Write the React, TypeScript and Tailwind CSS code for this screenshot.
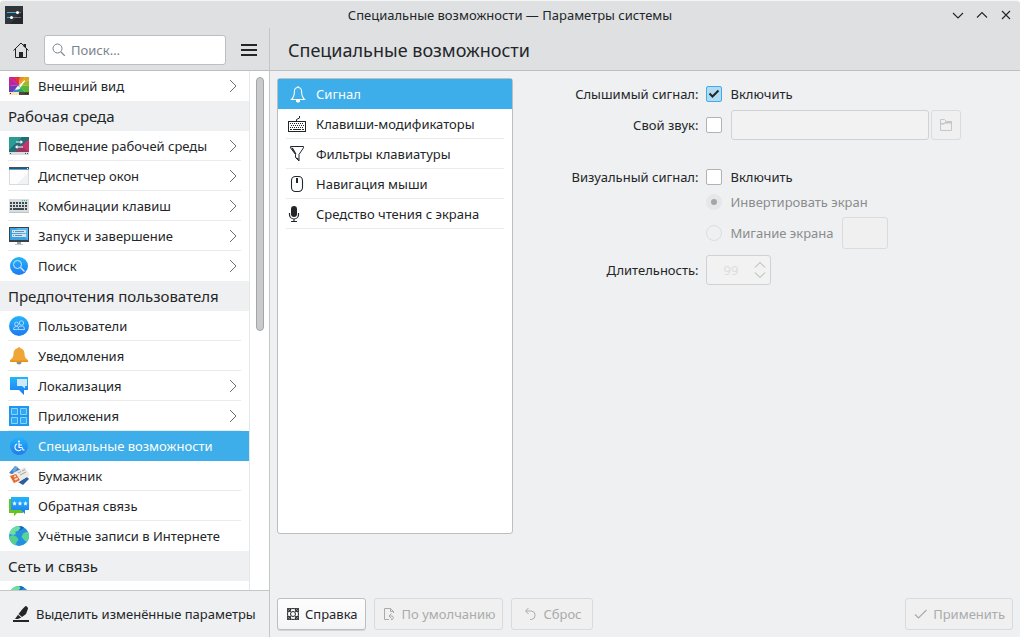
import React from "react";
import clsx from "clsx";

type IconProps = { className?: string };

function Svg({ size = 22, children, className }: { size?: number; children: React.ReactNode; className?: string }) {
  return (
    <svg
      width={size}
      height={size}
      viewBox={`0 0 ${size} ${size}`}
      fill="none"
      aria-hidden="true"
      className={clsx("shrink-0", className)}
    >
      {children}
    </svg>
  );
}

/* ---------- colour icons of the sidebar ---------- */

const AppearanceIcon = () => (
  <Svg>
    <path d="M1 2h10v8z" fill="#e2187a" />
    <path d="M1 2v9l10-1z" fill="#c0249a" />
    <path d="M1 2h5l5 8z" fill="#d01f92" />
    <path d="M6 2h6l-1 8z" fill="#e8352d" />
    <path d="M12 2h5l-6 8z" fill="#f08a1d" />
    <path d="M17 2h4v3l-10 5z" fill="#d9a81c" />
    <path d="M21 5v6l-10-1z" fill="#a6b51f" />
    <path d="M21 11v6h-4l-6-7z" fill="#5cb531" />
    <path d="M17 17h-6v-7z" fill="#2fa866" />
    <path d="M11 17H5l6-7z" fill="#2a8fb5" />
    <path d="M5 17H1v-6l10-1z" fill="#6d3cb8" />
    <path d="M16.500 5l-5.500 6 1.500 1.500 4.500-6.500z" fill="#fff" />
    <path d="M10.500 11l2 2c-1 1.500-3 2-5.500 1.500 1.500-1 1.500-3 3.500-3.500z" fill="#f5f5f5" />
    <path d="M1 17h10v3H1z" fill="#fbe3c8" />
    <path d="M11 17h10v3H11z" fill="#4b4a3a" />
    <path d="M2 18h1v1H2zM17 18h1v1h-1zM19 18h1v1h-1z" fill="#222" />
  </Svg>
);

const WorkspaceIcon = () => (
  <Svg>
    <path d="M1 2h20v15H1z" fill="#246c78" />
    <path d="M1 2h13L1 15z" fill="#2a9d93" />
    <path d="M21 4v13H7z" fill="#c7336b" />
    <path d="M13 11l8 6H7z" fill="#93375f" />
    <path d="M8 7h6M9 12h6" stroke="#fff" strokeWidth="1.200" />
    <path d="M12.500 5L15 7l-2.500 2zM9.500 10L7 12l2.500 2z" fill="#fff" />
    <path d="M1 17h20v3H1z" fill="#d9dcde" />
    <path d="M2 18h1v1H2zM17 18h1v1h-1zM19 18h1v1h-1z" fill="#45505a" />
  </Svg>
);

const WindowIcon = () => (
  <Svg>
    <path d="M1 2h20v18H1z" fill="#d7dade" />
    <path d="M2 5h18v14H2z" fill="#fdfdfd" />
    <path d="M20 8v11H9z" fill="#f1f2f4" />
    <path d="M1 2h20v3H1z" fill="#43505f" />
    <path d="M1 4h20v1H1z" fill="#3daee9" />
    <path d="M19 3h1v1h-1z" fill="#fff" />
  </Svg>
);

const KeyboardIcon = () => (
  <Svg>
    <path d="M1 4h20v14H1z" fill="#dadddf" />
    <path d="M14 5h1v1h-1zM16 5h1v1h-1zM18 5h1v1h-1z" fill="#2ecc71" />
    <path d="M2 8h18M2 11h18M2 14h18" stroke="#3f4a50" strokeWidth="2" strokeDasharray="2 1" />
    <path d="M6 14h9" stroke="#3f4a50" strokeWidth="2" />
    <path d="M1 17h20v1H1z" fill="#bfc3c6" />
  </Svg>
);

const StartupIcon = () => (
  <Svg>
    <path d="M1 2h20v15H1z" fill="#3a4249" />
    <path d="M2 3h18v12H2z" fill="#3aa3e3" />
    <path d="M8 3h12v12z" fill="#58b7ee" />
    <path d="M4 5h14v3H4zM4 9h14v3H4z" fill="#d3e4f1" />
    <path d="M5 6h1v1H5zM7 6h9v1H7zM5 10h1v1H5zM7 10h7v1H7z" fill="#6b8cab" />
    <path d="M9 17h4v2H9z" fill="#9ba1a5" />
    <path d="M7 19h8v1H7z" fill="#c5c9cc" />
  </Svg>
);

const SearchCircleIcon = () => (
  <Svg>
    <defs>
      <linearGradient id="blueDisc" x1="0" y1="0" x2="0" y2="1">
        <stop stopColor="#23b5fb" />
        <stop offset="1" stopColor="#1f7af0" />
      </linearGradient>
    </defs>
    <circle cx="11" cy="11" r="9" fill="url(#blueDisc)" />
    <circle cx="9.500" cy="9.500" r="4" stroke="#cfe9fd" />
    <path d="M12.500 12.500l4 4" stroke="#cfe9fd" strokeWidth="1.200" />
  </Svg>
);

const UsersIcon = () => (
  <Svg>
    <circle cx="11" cy="11" r="10" fill="url(#blueDisc)" />
    <g stroke="#b9e0fc" strokeWidth=".9">
      <circle cx="8.500" cy="9" r="1.900" />
      <circle cx="13.500" cy="8" r="2.200" />
      <path d="M5.500 14.500c0-2 1-3 3-3 1 0 1.700.3 2.200 1M5.500 14.500h4M10 14.500c0-2.300 1.200-3.500 3.500-3.500 2 0 3 1.200 3 3.500z" />
    </g>
  </Svg>
);

const BellIcon = () => (
  <Svg>
    <path d="M8.500 17h5a2.500 2.500 0 0 1-5 0z" fill="#8b8f93" />
    <path d="M10 3a1 1 0 0 1 2 0c3 .6 4.500 3 4.500 5.500 0 3.500 1 5 3.500 6.500v1.500H2V15c2.500-1.500 3.500-3 3.500-6.500C5.500 6 7 3.600 10 3z" fill="#f0a637" />
    <path d="M2 15.500h18V17H2z" fill="#e8920f" />
  </Svg>
);

const LocaleIcon = () => (
  <Svg>
    <path d="M2 2h18v13h-4v5l-5-5H2z" fill="url(#blueDisc)" />
    <path d="M9 4h10v7h-2v2.500L14 11H9z" fill="#cfe9fb" />
  </Svg>
);

const AppsIcon = () => (
  <Svg>
    <path d="M1 1h20v20H1z" fill="#2196ee" />
    <path
      d="M3.500 3.500h6v6h-6zM12.500 3.500h6v6h-6zM3.500 12.500h6v6h-6zM12.500 12.500h6v6h-6z"
      fill="#2ea9f6"
      stroke="#8fd2fb"
    />
  </Svg>
);

const AccessIcon = () => (
  <Svg>
    <circle cx="11" cy="11" r="9" fill="url(#blueDisc)" />
    <circle cx="11" cy="6.500" r="1" fill="#fff" />
    <path d="M11 8v4.500h3l1.200 2.500h1.300M11 10h3" stroke="#fff" strokeWidth="1.100" />
    <path d="M9 9a3.500 3.500 0 1 0 4.300 5.200" stroke="#fff" strokeWidth="1.100" />
  </Svg>
);

const WalletIcon = () => (
  <Svg>
    <path d="M1 8l6-7 6 4-4 6z" fill="#3f83c4" />
    <path d="M7 1l3 1-3 5-3-1z" fill="#6aa7dd" />
    <path d="M10 17l9-5 2 2-6 6z" fill="#2d5f9c" />
    <path d="M5 8l12-6 5 8-11 7z" fill="#eceae6" />
    <path d="M0 10l8-2 5 7-7 4z" fill="#f6f3ef" />
    <path d="M2 11l6-2 4 6-6 3z" fill="#e5672b" />
    <path d="M5.500 11l2-.8.8 1.500-2 .9zM6.200 14l3-1.500 1 1.500-3 1.500z" fill="#fbe4d8" />
    <path d="M10 8l3-1.500M14 6l3-1.500M12 10l6-3" stroke="#97989a" strokeWidth=".9" />
  </Svg>
);

const FeedbackIcon = () => (
  <Svg>
    <path d="M1 4h14v14H9l-3 3v-3H1z" fill="#64c422" />
    <path d="M3 2h18v13h-4v4l-4-4H3z" fill="url(#blueDisc)" />
    <path
      d="M6.500 6l.7 1.500 1.600.2-1.200 1.100.3 1.700-1.400-.8-1.400.8.3-1.700-1.200-1.100 1.600-.2zM12 6l.7 1.500 1.600.2-1.200 1.100.3 1.700-1.400-.8-1.400.8.3-1.700-1.200-1.100 1.600-.2zM17.500 6l.7 1.500 1.600.2-1.200 1.100.3 1.700-1.400-.8-1.400.8.3-1.700-1.200-1.100 1.600-.2z"
      fill="#e9f6ff"
    />
  </Svg>
);

const GlobeIcon = () => (
  <Svg>
    <circle cx="11" cy="11" r="10" fill="#2391e0" />
    <path d="M10 1.100a10 10 0 0 1 6 1.300l-2 2-3 1z" fill="#1769b5" />
    <path d="M1.800 7A10 10 0 0 1 11 1l1.500 2-2 2.500L7 7l1 2-3 1-3-1z" fill="#6fdca0" />
    <path d="M2 11l3-1 4 2 1.500 3-2 2-.5 3.500A10 10 0 0 1 1.200 12z" fill="#53cf92" />
    <path d="M20.200 7.200A10 10 0 0 1 19 17l-3-2-2.500-3 1.500-3.500 3-1.500z" fill="#5bd298" />
  </Svg>
);

/* ---------- monochrome icons of the module list ---------- */

const AlarmIcon = () => (
  <Svg>
    <path
      d="M12 4.500c-2.600 0-3.600 2-3.600 4 0 4-.4 5.500-2.900 8h13c-2.500-2.500-2.900-4-2.900-8 0-2-1-4-3.600-4zM12 3v1.500"
      stroke="currentColor"
      strokeWidth="1.100"
    />
    <path d="M10 17h4v1.500l-1 1h-2l-1-1z" fill="currentColor" />
  </Svg>
);

const ModifierIcon = () => (
  <Svg>
    <path d="M2 8h18v11H2zM3 9v9h16V9z" fill="currentColor" fillRule="evenodd" />
    <path d="M10.500 8V6.500l3-1.500V3" stroke="currentColor" />
    <path d="M4 10.500h14M5 12.500h13M4 14.500h14" stroke="currentColor" strokeDasharray="1 1" />
    <path d="M4 16.500h2M7 16.500h8M16 16.500h2" stroke="currentColor" />
  </Svg>
);

const FilterIcon = () => (
  <Svg>
    <path d="M4.500 3.500h13v1.300l-4.500 6.700V18l-3.500-3.500v-3L4.500 4.800z" stroke="currentColor" />
    <path d="M5 4.500l4.500 7 1-.5L7 5zM9.500 14l3 3.500v-2z" fill="currentColor" />
  </Svg>
);

const MouseIcon = () => (
  <Svg>
    <rect x="5.500" y="3.500" width="11" height="15" rx="4" stroke="currentColor" strokeWidth="1.100" />
    <path d="M10 5h2v5h-2z" fill="currentColor" />
  </Svg>
);

const MicIcon = () => (
  <Svg>
    <rect x="5" y="3" width="6" height="11" rx="3" fill="currentColor" />
    <path d="M3.500 10v1.500a4.500 4.500 0 0 0 9 0V10M8 16v3" stroke="currentColor" strokeWidth="1.200" />
    <path d="M5 18h6v1H5z" fill="currentColor" />
  </Svg>
);

/* ---------- 16px action icons ---------- */

const HomeIcon = () => (
  <Svg size={16}>
    <path d="M.5 8.500L8 1l7.500 7.500M2.500 7v8.500h11V7" stroke="currentColor" />
    <path d="M6 10h4v5.500H6zM10.500 2h2.500v4.500l-2.500-2z" fill="currentColor" />
  </Svg>
);

const MenuIcon = () => (
  <Svg size={16}>
    <path d="M0 2h16v2H0zM0 7h16v2H0zM0 12h16v2H0z" fill="currentColor" />
  </Svg>
);

const LensIcon = ({ className }: IconProps) => (
  <Svg size={16} className={className}>
    <circle cx="6.500" cy="6.500" r="4.500" stroke="currentColor" />
    <path d="M9.800 9.800l4 4" stroke="currentColor" strokeWidth="1.200" />
  </Svg>
);

const MarkerIcon = () => (
  <Svg size={16}>
    <path d="M0 14h16v2H0z" fill="currentColor" />
    <path d="M9.500 3L12.500 0c1.500.2 2.500 1.500 2.500 2.800L13 8l-4 3-3.500-3z" fill="currentColor" />
    <path d="M5 8.700L8.200 11.500 5 13H2z" fill="currentColor" />
  </Svg>
);

const HelpIcon = () => (
  <Svg size={16}>
    <circle cx="8" cy="8" r="5.500" stroke="currentColor" />
    <circle cx="8" cy="8" r="2.500" stroke="currentColor" />
    <path d="M2 2h4v4H2zM10 2h4v4h-4zM2 10h4v4H2zM10 10h4v4h-4z" fill="currentColor" opacity=".85" />
    <path d="M3.500 4.500l1-1M11.500 3.500l1 1M3.500 11.500l1 1M12.500 11.500l-1 1" stroke="#fff" strokeWidth=".8" />
  </Svg>
);

const DefaultsIcon = () => (
  <Svg size={16}>
    <path d="M7 13.500H2.500v-11h6l3 3V7M8.500 2.500v3h3" stroke="currentColor" />
    <path d="M9.500 7.500L7 10l2.500 2.500M7.500 10h2.500a1.800 1.800 0 0 1 0 3.500H9" stroke="currentColor" />
  </Svg>
);

const ResetIcon = () => (
  <Svg size={16}>
    <path d="M5.500 2L2.500 5l3 3M3 5h5.500a4.300 4.300 0 0 1 0 8.500H7" stroke="currentColor" />
  </Svg>
);

const ApplyIcon = () => (
  <Svg size={16}>
    <path d="M2 8.500L5.500 12l8-8" stroke="currentColor" strokeWidth="1.200" />
  </Svg>
);

const FolderIcon = () => (
  <Svg size={16}>
    <path d="M2.500 13.500v-11h4l2 2h5v9z" stroke="currentColor" />
    <path d="M2 6h4l2-2h6v2.500H7l-1 1H2z" fill="currentColor" />
  </Svg>
);

type Entry = { label: string; icon: () => React.ReactNode; arrow?: boolean; active?: boolean };
type Section = { title?: string; entries: Entry[] };

const sections: Section[] = [
  { entries: [{ label: "Внешний вид", icon: AppearanceIcon, arrow: true }] },
  {
    title: "Рабочая среда",
    entries: [
      { label: "Поведение рабочей среды", icon: WorkspaceIcon, arrow: true },
      { label: "Диспетчер окон", icon: WindowIcon, arrow: true },
      { label: "Комбинации клавиш", icon: KeyboardIcon, arrow: true },
      { label: "Запуск и завершение", icon: StartupIcon, arrow: true },
      { label: "Поиск", icon: SearchCircleIcon, arrow: true },
    ],
  },
  {
    title: "Предпочтения пользователя",
    entries: [
      { label: "Пользователи", icon: UsersIcon },
      { label: "Уведомления", icon: BellIcon },
      { label: "Локализация", icon: LocaleIcon, arrow: true },
      { label: "Приложения", icon: AppsIcon, arrow: true },
      { label: "Специальные возможности", icon: AccessIcon, active: true },
      { label: "Бумажник", icon: WalletIcon },
      { label: "Обратная связь", icon: FeedbackIcon },
      { label: "Учётные записи в Интернете", icon: GlobeIcon },
    ],
  },
  { title: "Сеть и связь", entries: [] },
];

const modules: Entry[] = [
  { label: "Сигнал", icon: AlarmIcon, active: true },
  { label: "Клавиши-модификаторы", icon: ModifierIcon },
  { label: "Фильтры клавиатуры", icon: FilterIcon },
  { label: "Навигация мыши", icon: MouseIcon },
  { label: "Средство чтения с экрана", icon: MicIcon },
];

function Row({ entry, last }: { entry: Entry; last?: boolean }) {
  const Icon = entry.icon;
  return (
    <li className={clsx("px-2", entry.active && "bg-[#3daee9] text-[#fcfcfc]")}>
      <a
        href="#"
        aria-current={entry.active ? "page" : undefined}
        className={clsx(
          "flex h-[30px] items-center gap-2 border-b",
          entry.active || last ? "border-transparent" : "border-[#e9eaeb]"
        )}
      >
        <Icon />
        <span className="flex-1 whitespace-nowrap">{entry.label}</span>
        {entry.arrow && (
          <Svg size={16} className="text-[#6b6e70]">
            <path d="M5 2l6 6-6 6" stroke="currentColor" />
          </Svg>
        )}
      </a>
    </li>
  );
}

function Sidebar() {
  return (
    <aside className="flex w-[270px] shrink-0 flex-col border-r border-[#c4c6c8]">
      <div className="flex h-[43px] shrink-0 items-center border-b border-[#bcbec0] bg-[#dee0e2] pt-0.5 pr-3 pl-[13px]">
        <button aria-label="Главная">
          <HomeIcon />
        </button>
        <label className="mr-[15px] ml-[15px] flex h-[30px] min-w-0 flex-1 items-center gap-1 rounded-[3px] border border-[#bcbec0] bg-white px-1.5">
          <LensIcon className="text-[#7a838b]" />
          <input
            type="search"
            aria-label="Поиск"
            placeholder="Поиск…"
            className="min-w-0 flex-1 bg-transparent outline-none placeholder:text-[#7a838b]"
          />
        </label>
        <button aria-label="Меню">
          <MenuIcon />
        </button>
      </div>

      <div className="flex min-h-0 flex-1 bg-white">
        <nav className="min-w-0 flex-1 overflow-hidden border-r border-[#e6e7e8]">
          {sections.map((section, i) => (
            <section key={i}>
              {section.title && (
                <h2 className="h-[30px] bg-[#eff0f1] px-2 text-[15px] leading-[30px]">{section.title}</h2>
              )}
              <ul>
                {section.entries.map((entry, j) => (
                  <Row key={entry.label} entry={entry} last={j === section.entries.length - 1} />
                ))}
              </ul>
            </section>
          ))}
          <div className="px-2 py-1">
            <GlobeIcon />
          </div>
        </nav>
        <div className="flex w-[19px] justify-center py-1.5">
          <div className="h-1/2 w-2 rounded-full border border-[#a3a5a6] bg-[#c9cacb]" />
        </div>
      </div>

      <div className="shrink-0 border-t border-[#c4c6c8]">
        <button className="flex h-[46px] items-center gap-[7px] pl-[13px] whitespace-nowrap">
          <MarkerIcon />
          Выделить изменённые параметры
        </button>
      </div>
    </aside>
  );
}

function CheckBox(props: React.ComponentProps<"input">) {
  return (
    <span className="relative flex">
      <input
        type="checkbox"
        className="peer size-4 appearance-none rounded-[2px] border border-[#b0b2b4] bg-white checked:border-[#3daee9] checked:bg-[#b1dbf2]"
        {...props}
      />
      <svg
        viewBox="0 0 16 16"
        fill="none"
        className="pointer-events-none absolute inset-0 size-4 opacity-0 peer-checked:opacity-100"
      >
        <path d="M3.500 7.500l3 3 6-6" stroke="#232629" strokeWidth="2" />
      </svg>
    </span>
  );
}

function Radio(props: React.ComponentProps<"input">) {
  return (
    <input
      type="radio"
      name="visual"
      disabled
      className="size-4 appearance-none rounded-full border border-[#dcddde] bg-[#f0f0f0] checked:border-[5px] checked:border-[#e6e7e8] checked:bg-[#a4a5a6]"
      {...props}
    />
  );
}

function BellForm() {
  return (
    <form className="flex min-w-0 flex-1 justify-center pt-1.5">
      <div className="grid h-fit grid-cols-[max-content_max-content] items-center gap-x-2 gap-y-1.5">
        <label htmlFor="audible" className="text-right leading-5">
          Слышимый сигнал:
        </label>
        <div className="flex items-center gap-2">
          <CheckBox id="audible" defaultChecked />
          <label htmlFor="audible" className="leading-5">
            Включить
          </label>
        </div>

        <label htmlFor="custom" className="text-right">
          Свой звук:
        </label>
        <div className="flex items-center">
          <CheckBox id="custom" />
          <input
            type="text"
            disabled
            aria-label="Файл звука"
            className="ml-[9px] h-[30px] w-[198px] rounded-[3px] border border-[#d0d1d3] bg-[#f2f2f2] px-2"
          />
          <button
            type="button"
            disabled
            aria-label="Выбрать файл"
            className="ml-0.5 flex size-[30px] items-center justify-center rounded-[3px] border border-[#dadbdc] bg-[#f0f0f0] text-[#c4c6c7]"
          >
            <FolderIcon />
          </button>
        </div>

        <label htmlFor="visual" className="mt-[21px] text-right leading-5">
          Визуальный сигнал:
        </label>
        <div className="mt-[21px] flex items-center gap-2">
          <CheckBox id="visual" />
          <label htmlFor="visual" className="leading-5">
            Включить
          </label>
        </div>

        <div className="col-start-2 flex h-[18px] items-center gap-2 text-[#8a8c8e]">
          <Radio id="invert" defaultChecked />
          <label htmlFor="invert">Инвертировать экран</label>
        </div>

        <div className="col-start-2 flex items-center gap-2 text-[#8a8c8e]">
          <Radio id="flash" />
          <label htmlFor="flash">Мигание экрана</label>
          <button
            type="button"
            disabled
            aria-label="Цвет мигания"
            className="h-8 w-[46px] rounded-[3px] border border-[#dadbdc] bg-[#f0f0f0]"
          />
        </div>

        <label htmlFor="duration" className="text-right">
          Длительность:
        </label>
        <div className="flex h-[30px] w-[65px] items-center rounded-[3px] border border-[#d0d1d3] bg-[#f2f2f2] text-[#a9abac]">
          <input
            id="duration"
            type="text"
            inputMode="numeric"
            disabled
            defaultValue="99"
            className="w-[47px] min-w-0 bg-transparent text-center text-[#dcddde]"
          />
          <div className="flex flex-col gap-0.5">
            <button type="button" disabled aria-label="Больше" className="flex">
              <svg width="12" height="8" fill="none">
                <path d="M1 6.500l5-5 5 5" stroke="currentColor" />
              </svg>
            </button>
            <button type="button" disabled aria-label="Меньше" className="flex">
              <svg width="12" height="8" fill="none">
                <path d="M1 1.500l5 5 5-5" stroke="currentColor" />
              </svg>
            </button>
          </div>
        </div>
      </div>
    </form>
  );
}

function ActionButton({ icon, children, ...rest }: React.ComponentProps<"button"> & { icon: React.ReactNode }) {
  return (
    <button
      className={clsx(
        "flex h-8 min-w-[82px] items-center justify-center gap-1 rounded-[3px] border px-[7px] whitespace-nowrap",
        rest.disabled
          ? "border-[#d9dadb] bg-[#f0f0f0] text-[#a9abac]"
          : "border-[#bcbec0] bg-gradient-to-b from-[#fdfdfd] to-[#f5f5f5] shadow-[0_1px_0_#d4d5d6]"
      )}
      {...rest}
    >
      {icon}
      {children}
    </button>
  );
}

export default function App() {
  return (
    <div className="flex h-screen flex-col overflow-hidden rounded-t-[4px] border-t border-[#f4f5f5] bg-[#eff0f1] font-['Noto_Sans',sans-serif] text-[13px] leading-5 text-[#232629]">
      <header className="grid h-[27px] shrink-0 grid-cols-[80px_1fr_80px] items-center bg-[#dee0e2]">
        <svg width="18" height="18" viewBox="0 0 18 18" className="ml-[5px]" aria-hidden="true">
          <path d="M0 0h18v18H0z" fill="#31363b" />
          <path d="M5 18L18 5v13z" fill="#24282c" />
          <path d="M2 6h11v1H2zM2 11h5v1H2z" fill="#3daee9" />
          <path d="M14 6h2v1h-2zM7 11h9v1H7z" fill="#6a7177" />
          <circle cx="12.500" cy="6.500" r="1.500" fill="#fff" />
          <circle cx="6.500" cy="11.500" r="1.500" fill="#fff" />
        </svg>
        <h1 className="text-center">Специальные возможности — Параметры системы</h1>
        <div className="flex justify-end gap-2 pr-1.5">
          <button aria-label="Свернуть">
            <Svg size={16}>
              <path d="M3 6l5 5 5-5" stroke="currentColor" strokeWidth="1.100" />
            </Svg>
          </button>
          <button aria-label="Развернуть">
            <Svg size={16}>
              <path d="M3 10.500l5-5 5 5" stroke="currentColor" strokeWidth="1.100" />
            </Svg>
          </button>
          <button aria-label="Закрыть">
            <Svg size={16}>
              <path d="M4 4l8 8M12 4l-8 8" stroke="currentColor" strokeWidth="1.100" />
            </Svg>
          </button>
        </div>
      </header>

      <div className="flex min-h-0 flex-1">
        <Sidebar />
        <main className="flex min-w-0 flex-1 flex-col">
          <div className="flex h-[43px] shrink-0 items-center border-b border-[#bcbec0] bg-[#dee0e2] px-[18px] pt-0.5">
            <h2 className="text-[18px]">Специальные возможности</h2>
          </div>

          <div className="flex min-h-0 flex-1 pt-[7px] pb-16 pl-[7px]">
            <ul className="w-[236px] shrink-0 rounded-[3px] border border-[#bcbec0] bg-white">
              {modules.map((m) => (
                <Row key={m.label} entry={m} />
              ))}
            </ul>
            <BellForm />
          </div>

          <footer className="flex shrink-0 gap-2 px-[7px] pb-[7px]">
            <ActionButton icon={<HelpIcon />}>Справка</ActionButton>
            <ActionButton icon={<DefaultsIcon />} disabled>
              По умолчанию
            </ActionButton>
            <ActionButton icon={<ResetIcon />} disabled>
              Сброс
            </ActionButton>
            <div className="flex-1" />
            <ActionButton icon={<ApplyIcon />} disabled>
              Применить
            </ActionButton>
          </footer>
        </main>
      </div>
    </div>
  );
}
